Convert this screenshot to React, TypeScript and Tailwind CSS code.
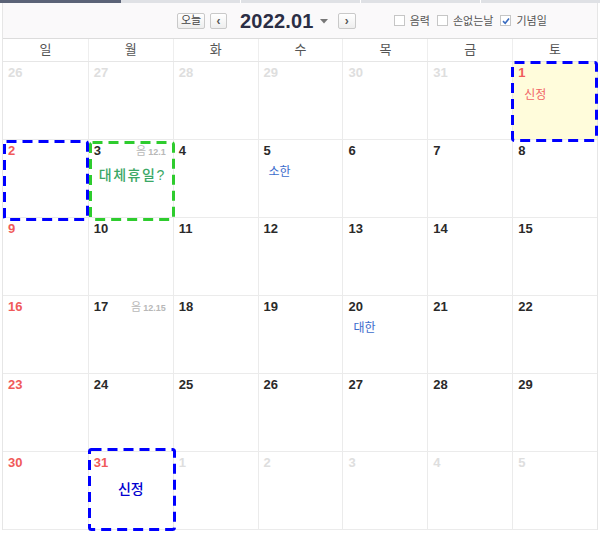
const FONT = "font-['Liberation_Sans','Noto_Sans_CJK_KR',sans-serif]";

type Day = {
  n: number;
  tone: "muted" | "normal" | "red";
  lunar?: string;
  event?: { text: string; cls: string };
  bg?: string;
};

const dayNames = ["일", "월", "화", "수", "목", "금", "토"];

function mk(n: number, tone: Day["tone"], extra: Partial<Day> = {}): Day {
  return { n, tone, ...extra };
}

const weeks: Day[][] = [
  [
    mk(26, "muted"),
    mk(27, "muted"),
    mk(28, "muted"),
    mk(29, "muted"),
    mk(30, "muted"),
    mk(31, "muted"),
    mk(1, "red", {
      bg: "bg-[#fffcdb]",
      event: { text: "신정", cls: "pl-[11px] mt-[5px] text-[12px] text-[#f16666]" },
    }),
  ],
  [
    mk(2, "red"),
    mk(3, "normal", {
      lunar: "12.1",
      event: {
        text: "대체휴일?",
        cls: "pl-[10px] mt-[7px] text-[14px] font-medium tracking-[1.5px] text-[#3aa866]",
      },
    }),
    mk(4, "normal"),
    mk(5, "normal", {
      event: { text: "소한", cls: "pl-[10px] mt-[4px] text-[12px] text-[#3c6ccc]" },
    }),
    mk(6, "normal"),
    mk(7, "normal"),
    mk(8, "normal"),
  ],
  [9, 10, 11, 12, 13, 14, 15].map((n, i) => mk(n, i === 0 ? "red" : "normal")),
  [
    mk(16, "red"),
    mk(17, "normal", { lunar: "12.15" }),
    mk(18, "normal"),
    mk(19, "normal"),
    mk(20, "normal", {
      event: { text: "대한", cls: "pl-[10px] mt-[4px] text-[12px] text-[#3c6ccc]" },
    }),
    mk(21, "normal"),
    mk(22, "normal"),
  ],
  [23, 24, 25, 26, 27, 28, 29].map((n, i) => mk(n, i === 0 ? "red" : "normal")),
  [
    mk(30, "red"),
    mk(31, "red", {
      event: {
        text: "신정",
        cls: "mt-[9px] text-center text-[14px] font-medium text-[#0000d0]",
      },
    }),
    mk(1, "muted"),
    mk(2, "muted"),
    mk(3, "muted"),
    mk(4, "muted"),
    mk(5, "muted"),
  ],
];

const toneCls: Record<Day["tone"], string> = {
  muted: "text-[#dedede]",
  normal: "text-[#2a2a2a]",
  red: "text-[#f05a5a]",
};

function DayCell({ day, first }: { day: Day; first: boolean }) {
  return (
    <div
      className={`h-[78px] w-[85px] border-b border-[#ebebeb] ${
        first ? "" : "border-l"
      } ${day.bg ?? "bg-white"}`}
    >
      <div className="flex items-start justify-between pl-[5px] pr-[7px] pt-[3px]">
        <span className={`text-[13px] font-bold leading-[16px] ${toneCls[day.tone]}`}>
          {day.n}
        </span>
        {day.lunar && (
          <span className="flex items-baseline gap-[2px] pt-[1px] leading-[14px] text-[#b8b8b8]">
            <span className="text-[11px]">음</span>
            <span className="text-[9px] font-bold">{day.lunar}</span>
          </span>
        )}
      </div>
      {day.event && <div className={`leading-[18px] ${day.event.cls}`}>{day.event.text}</div>}
    </div>
  );
}

function NavButton({ children, cls }: { children: React.ReactNode; cls: string }) {
  return (
    <div
      className={`flex h-[16px] items-center justify-center rounded-[2px] border border-[#c9c9c9] bg-gradient-to-b from-white to-[#eeeeee] ${cls}`}
    >
      {children}
    </div>
  );
}

function Check({ label, checked }: { label: string; checked?: boolean }) {
  return (
    <div className="flex items-center gap-[5px]">
      <div className="flex h-[11px] w-[11px] items-center justify-center border border-[#c6c6c6] bg-white">
        {checked && (
          <svg width="8" height="8" viewBox="0 0 8 8">
            <path d="M1 4.2 L3.2 6.3 L7 1.5" fill="none" stroke="#3a6cc0" strokeWidth="1.6" />
          </svg>
        )}
      </div>
      <span className="text-[11px] leading-[12px] text-[#555]">{label}</span>
    </div>
  );
}

function Dashed({ cls, w, h, color }: { cls: string; w: number; h: number; color: string }) {
  return (
    <svg className={`pointer-events-none absolute ${cls}`} width={w} height={h}>
      <rect
        x="1.5"
        y="1.5"
        width={w - 3}
        height={h - 3}
        rx="2"
        fill="none"
        stroke={color}
        strokeWidth="3"
        strokeDasharray="10 6"
      />
    </svg>
  );
}

export default function App() {
  return (
    <div className={`relative h-[534px] w-[600px] overflow-hidden bg-white ${FONT}`}>
      {/* tab strip */}
      <div className="flex h-[3px]">
        <div className="w-[121px] bg-[#5b6377]" />
        <div className="w-[119px] bg-[#dfe1e5]" />
        <div className="ml-px w-[119px] bg-[#dfe1e5]" />
        <div className="ml-px w-[119px] bg-[#dfe1e5]" />
        <div className="ml-px flex-1 bg-[#dfe1e5]" />
      </div>

      <div className="mx-[2px] border-x border-[#e6e6e6]">
        {/* toolbar */}
        <div className="flex h-[36px] items-center border-b border-[#dcdcdc] bg-[#faf9fa]">
          <NavButton cls="ml-[174px] w-[28px]">
            <span className="text-[11px] leading-none text-[#444]">오늘</span>
          </NavButton>
          <NavButton cls="ml-[5px] w-[17px]">
            <span className="text-[12px] font-bold leading-none text-[#555]">‹</span>
          </NavButton>
          <span className="ml-[13px] text-[20px] font-bold leading-none tracking-[0.2px] text-[#2b2e45]">
            2022.01
          </span>
          <svg className="ml-[6px] mt-[2px]" width="8" height="5" viewBox="0 0 8 5">
            <path d="M0 0 H8 L4 4.5 Z" fill="#777" />
          </svg>
          <NavButton cls="ml-[10px] w-[18px]">
            <span className="text-[12px] font-bold leading-none text-[#555]">›</span>
          </NavButton>
          <div className="ml-[38px] flex items-center gap-[7px]">
            <Check label="음력" />
            <Check label="손없는날" />
            <Check label="기념일" checked />
          </div>
        </div>

        {/* weekday header */}
        <div className="flex border-b border-[#e6e6e6]">
          {dayNames.map((d, i) => (
            <div
              key={d}
              className={`h-[22px] w-[85px] text-center text-[13px] leading-[22px] text-[#555] ${
                i === 0 ? "" : "border-l border-[#eeeeee]"
              }`}
            >
              {d}
            </div>
          ))}
        </div>

        {/* weeks */}
        {weeks.map((week, wi) => (
          <div key={wi} className="flex">
            {week.map((day, di) => (
              <DayCell key={di} day={day} first={di === 0} />
            ))}
          </div>
        ))}
      </div>

      {/* annotation overlays */}
      <Dashed cls="left-[511px] top-[61px]" w={87} h={81} color="#0000ff" />
      <Dashed cls="left-[3px] top-[140px]" w={86} h={81} color="#0000ff" />
      <Dashed cls="left-[89px] top-[141px]" w={86} h={80} color="#2ecc2e" />
      <Dashed cls="left-[88px] top-[448px]" w={88} h={83} color="#0000ff" />
    </div>
  );
}
